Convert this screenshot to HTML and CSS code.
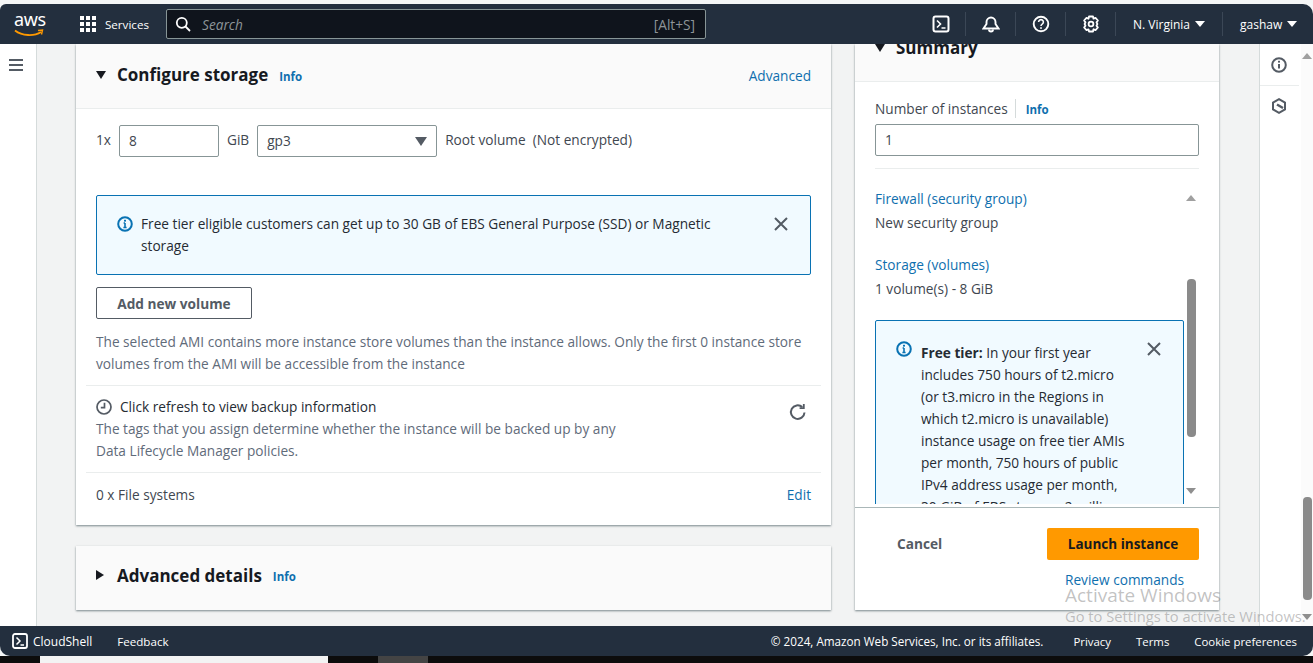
FILE: index.html
```html
<!DOCTYPE html>
<html>
<head>
    <title>Launch an instance</title>
    <link rel="stylesheet" href="styles.css">
</head>
<body>
    <div class="page">
        <header class="topbar">
            <div class="logo">
                <span class="logo-text">aws</span>
                <svg class="logo-smile" width="30" height="8" viewBox="0 0 30 8"><path d="M1 1.5C8 7 20 7.5 27 3" fill="none" stroke="#f90" stroke-width="1.8"/><path d="M24 1.5l4.5-.5-1 4.5" fill="none" stroke="#f90" stroke-width="1.4"/></svg>
            </div>
            <span class="services">
                <svg width="18" height="18" viewBox="0 0 18 18" fill="#fff"><rect x="1" y="1" width="4" height="4"/><rect x="7" y="1" width="4" height="4"/><rect x="13" y="1" width="4" height="4"/><rect x="1" y="7" width="4" height="4"/><rect x="7" y="7" width="4" height="4"/><rect x="13" y="7" width="4" height="4"/><rect x="1" y="13" width="4" height="4"/><rect x="7" y="13" width="4" height="4"/><rect x="13" y="13" width="4" height="4"/></svg>
                Services
            </span>
            <div class="search">
                <svg width="16" height="16" viewBox="0 0 16 16" fill="none" stroke="#fff" stroke-width="1.8"><circle cx="6.8" cy="6.8" r="5"/><path d="M10.5 10.5L15 15"/></svg>
                <span class="search-text">Search</span>
                <span class="search-key">[Alt+S]</span>
            </div>
            <div class="top-icons">
                <span class="top-icon">
                    <svg width="18" height="18" viewBox="0 0 18 18" fill="none" stroke="#fff" stroke-width="2"><rect x="1.5" y="1.5" width="15" height="15" rx="2"/><path d="M5 5.5l3.5 3.5L5 12.5M9.5 13H13.5" stroke-width="1.6"/></svg>
                </span>
                <span class="top-icon">
                    <svg width="18" height="18" viewBox="0 0 18 18" fill="none" stroke="#fff" stroke-width="1.9"><path d="M1.5 13.5h15L13.5 9V7a4.5 4.5 0 0 0-9 0v2z"/><path d="M7 14.5a2 2 0 0 0 4 0"/></svg>
                </span>
                <span class="top-icon">
                    <svg width="18" height="18" viewBox="0 0 18 18" fill="none" stroke="#fff" stroke-width="1.9"><circle cx="9" cy="9" r="7.3"/><path d="M6.6 7a2.4 2.4 0 1 1 3.6 2.1c-.8.5-1.2.9-1.2 1.9" stroke-width="1.6"/><rect x="8.2" y="12.2" width="1.6" height="1.7" fill="#fff" stroke="none"/></svg>
                </span>
                <span class="top-icon">
                    <svg width="18" height="18" viewBox="0 0 18 18" fill="none" stroke="#fff" stroke-width="1.8"><path d="M7 1.5h4l.5 2.2 2-.8 2.4 2.6-1.4 1.9.9 1.6-.9 1.6 1.4 1.9-2.4 2.6-2-.8-.5 2.2H7l-.5-2.2-2 .8-2.4-2.6 1.4-1.9L2.6 9l.9-1.6-1.4-1.9 2.4-2.6 2 .8z" stroke-linejoin="round"/><circle cx="9" cy="9" r="2.4"/></svg>
                </span>
                <span class="top-menu region">N. Virginia <i class="tri"></i></span>
                <span class="top-menu user">gashaw <i class="tri"></i></span>
            </div>
        </header>

        <div class="main">
            <nav class="sidenav">
                <svg width="16" height="14" viewBox="0 0 16 14" stroke="#545b64" stroke-width="2"><path d="M1 2h14M1 7h14M1 12h14"/></svg>
            </nav>

            <div class="content">
                <div class="left-col">
                    <section class="card storage">
                        <div class="card-head">
                            <i class="caret-down"></i>
                            <h2>Configure storage</h2>
                            <a class="info">Info</a>
                            <a class="advanced">Advanced</a>
                        </div>
                        <div class="card-body">
                            <div class="volume-row">
                                <span>1x</span>
                                <span class="input size-input">8</span>
                                <span>GiB</span>
                                <span class="input type-select">gp3<i class="select-caret"></i></span>
                                <span>Root volume&nbsp; (Not encrypted)</span>
                            </div>
                            <div class="alert wide-alert">
                                <svg class="info-icon" width="16" height="16" viewBox="0 0 16 16" fill="none" stroke="#0972b3" stroke-width="2"><circle cx="8" cy="8" r="6.8"/><path d="M8 7v4.5M6.4 11.5h3.2M6.6 7H8" stroke-width="1.6"/><rect x="7" y="3.8" width="2" height="1.8" fill="#0972b3" stroke="none"/></svg>
                                <p>Free tier eligible customers can get up to 30 GB of EBS General Purpose (SSD) or Magnetic storage</p>
                                <svg class="close-icon" width="16" height="16" viewBox="0 0 16 16" stroke="#545b64" stroke-width="2"><path d="M2 2l12 12M14 2L2 14"/></svg>
                            </div>
                            <button class="add-btn">Add new volume</button>
                            <p class="muted ami-note">The selected AMI contains more instance store volumes than the instance allows. Only the first 0 instance store volumes from the AMI will be accessible from the instance</p>
                        </div>
                        <div class="backup-row">
                            <div class="backup-text">
                                <div class="backup-title">
                                    <svg width="16" height="16" viewBox="0 0 16 16" fill="none" stroke="#545b64" stroke-width="1.7"><circle cx="8" cy="8" r="7"/><path d="M8.5 3.8V8.6H4.8"/></svg>
                                    Click refresh to view backup information
                                </div>
                                <p class="muted">The tags that you assign determine whether the instance will be backed up by any<br>Data Lifecycle Manager policies.</p>
                            </div>
                            <svg class="refresh" width="18" height="18" viewBox="0 0 18 18" fill="none" stroke="#545b64" stroke-width="2"><path d="M15.5 9.5a6.8 6.8 0 1 1-2.2-5.4"/><path d="M14.8 1v4.2h-4.2" stroke-width="1.8"/></svg>
                        </div>
                        <div class="files-row">
                            <span>0 x File systems</span>
                            <a>Edit</a>
                        </div>
                    </section>

                    <section class="card advanced-card">
                        <i class="caret-right"></i>
                        <h2>Advanced details</h2>
                        <a class="info">Info</a>
                    </section>
                </div>

                <aside class="summary">
                    <div class="summary-head">
                        <i class="caret-down"></i>
                        <h2>Summary</h2>
                    </div>
                    <div class="summary-top">
                        <div class="count-label"><span>Number of instances</span><a class="info">Info</a></div>
                        <div class="input count-input">1</div>
                    </div>
                    <div class="summary-scroll">
                        <div class="scroll-inner">
                            <a class="sum-link">Firewall (security group)</a>
                            <p class="sum-value">New security group</p>
                            <a class="sum-link">Storage (volumes)</a>
                            <p class="sum-value">1 volume(s) - 8 GiB</p>
                            <div class="alert tier-alert">
                                <svg class="info-icon" width="16" height="16" viewBox="0 0 16 16" fill="none" stroke="#0972b3" stroke-width="2"><circle cx="8" cy="8" r="6.8"/><path d="M8 7v4.5M6.4 11.5h3.2M6.6 7H8" stroke-width="1.6"/><rect x="7" y="3.8" width="2" height="1.8" fill="#0972b3" stroke="none"/></svg>
                                <p><b>Free tier:</b> In your first year includes 750 hours of t2.micro (or t3.micro in the Regions in which t2.micro is unavailable) instance usage on free tier AMIs per month, 750 hours of public IPv4 address usage per month, 30 GiB of EBS storage, 2 million</p>
                                <svg class="close-icon" width="16" height="16" viewBox="0 0 16 16" stroke="#545b64" stroke-width="2"><path d="M2 2l12 12M14 2L2 14"/></svg>
                            </div>
                        </div>
                        <div class="inner-bar">
                            <i class="arrow-up"></i>
                            <div class="inner-track"><div class="inner-thumb"></div></div>
                            <i class="arrow-down"></i>
                        </div>
                    </div>
                    <div class="summary-foot">
                        <div class="foot-btns">
                            <span class="cancel">Cancel</span>
                            <button class="launch">Launch instance</button>
                        </div>
                        <a class="review">Review commands</a>
                    </div>
                </aside>
            </div>

            <div class="rail">
                <svg width="16" height="16" viewBox="0 0 16 16" fill="none" stroke="#545b64" stroke-width="2"><circle cx="8" cy="8" r="6.8"/><path d="M8 7v4.5" stroke-width="2"/><rect x="7" y="3.8" width="2" height="1.8" fill="#545b64" stroke="none"/></svg>
                <span class="rail-line"></span>
                <svg width="16" height="16" viewBox="0 0 16 16" fill="none" stroke="#545b64" stroke-width="2"><path d="M8 1.2l6 3.4v6.8l-6 3.4-6-3.4V4.6z"/><path d="M6 6.5l6 3.5" stroke-width="2.4"/></svg>
            </div>

            <div class="page-bar">
                <i class="arrow-up"></i>
                <div class="page-track"><div class="page-thumb"></div></div>
                <i class="arrow-down"></i>
            </div>

            <div class="activate">
                <div class="activate-big">Activate Windows</div>
                <div class="activate-small">Go to Settings to activate Windows.</div>
            </div>
        </div>

        <footer class="footbar">
            <svg width="16" height="16" viewBox="0 0 16 16" fill="none" stroke="#fff" stroke-width="1.8"><rect x="1" y="1" width="14" height="14" rx="2"/><path d="M4.5 4.5L8 8l-3.5 3.5M8.5 12H12" stroke-width="1.5"/></svg>
            <span class="shell">CloudShell</span>
            <span class="feedback">Feedback</span>
            <span class="copy">© 2024, Amazon Web Services, Inc. or its affiliates.</span>
            <span class="foot-link first-link">Privacy</span>
            <span class="foot-link">Terms</span>
            <span class="foot-link">Cookie preferences</span>
        </footer>

        <div class="taskbar">
            <span class="task-a"></span>
            <span class="task-b"></span>
            <span class="task-c"></span>
            <span class="task-d"></span>
        </div>
    </div>
</body>
</html>
```

FILE: styles.css
```css
* {
    margin: 0;
    padding: 0;
    box-sizing: border-box;
}

html, body {
    height: 100%;
    overflow: hidden;
}

body {
    font-family: "Open Sans", "Noto Sans", Arial, sans-serif;
    font-size: 13.67px;
    color: #16191f;
    background-color: #fff;
}

a {
    color: #0f6fae;
}

.page {
    height: 663px;
    display: flex;
    flex-direction: column;
    padding-top: 4px;
    background-color: #f4f6f6;
}

/* top bar */
.topbar {
    height: 40px;
    flex: none;
    display: flex;
    align-items: center;
    background-color: #232f3e;
    color: #fff;
    border-radius: 6px 10px 0 0;
    position: relative;
    z-index: 2;
    padding-left: 14px;
}

.logo {
    width: 32px;
    height: 30px;
    position: relative;
}

.logo-text {
    display: block;
    font-family: "Noto Sans", sans-serif;
    font-size: 18px;
    line-height: 20px;
    letter-spacing: -0.4px;
}

.logo-smile {
    position: absolute;
    left: 0;
    top: 20px;
}

.services {
    display: flex;
    align-items: center;
    gap: 8px;
    margin-left: 33px;
    font-size: 11.6px;
    width: 87px;
    flex: none;
}

.search {
    width: 540px;
    height: 30px;
    flex: none;
    display: flex;
    align-items: center;
    padding: 0 10px 0 8px;
    background-color: #0f141c;
    border: 1px solid #879596;
    border-radius: 2px;
}

.search-text {
    margin-left: 11px;
    font-style: italic;
    color: #8d9499;
}

.search-key {
    margin-left: auto;
    color: #8d9499;
}

.top-icons {
    margin-left: auto;
    display: flex;
    align-items: center;
    height: 100%;
}

.top-icon {
    width: 50px;
    display: flex;
    justify-content: center;
    border-right: 1px solid #3b4756;
    height: 24px;
    align-items: center;
}

.top-menu {
    display: flex;
    align-items: center;
    gap: 5px;
    font-size: 12px;
    height: 24px;
}

.region {
    width: 107px;
    padding-left: 17px;
    border-right: 1px solid #3b4756;
}

.user {
    width: 90px;
    padding-left: 17px;
}

.tri {
    width: 0;
    height: 0;
    border-left: 5px solid transparent;
    border-right: 5px solid transparent;
    border-top: 6px solid #fff;
}

/* main area */
.main {
    flex: 1;
    min-height: 0;
    display: flex;
    position: relative;
    overflow: hidden;
}

.sidenav {
    width: 37px;
    flex: none;
    background-color: #fff;
    border-right: 1px solid #d5dbdb;
    padding: 13px 0 0 8px;
}

.content {
    width: 1222px;
    flex: none;
    display: flex;
    gap: 24px;
    padding-left: 39px;
    background-color: #f2f3f3;
    align-items: flex-start;
}

.left-col {
    width: 755px;
    flex: none;
}

.card {
    background-color: #fff;
    box-shadow: 0 1px 2px rgba(0, 28, 36, 0.5);
}

.card-head {
    height: 65px;
    display: flex;
    align-items: center;
    padding: 0 20px 3px;
    background-color: #fafafa;
    border-bottom: 1px solid #eaeded;
}

h2 {
    font-size: 17px;
    font-weight: 700;
    color: #16191f;
}

.info {
    font-size: 11.5px;
    font-weight: 700;
    margin-left: 11px;
    margin-top: 3px;
}

.advanced {
    margin-left: auto;
    margin-top: 2px;
}

.caret-down {
    width: 0;
    height: 0;
    flex: none;
    margin-right: 11px;
    border-left: 5.5px solid transparent;
    border-right: 5.5px solid transparent;
    border-top: 8px solid #16191f;
}

.caret-right {
    width: 0;
    height: 0;
    flex: none;
    margin-right: 13px;
    border-top: 5.5px solid transparent;
    border-bottom: 5.5px solid transparent;
    border-left: 8px solid #16191f;
}

.card-body {
    padding: 16px 20px 10px;
}

.volume-row {
    display: flex;
    align-items: center;
    height: 32px;
    gap: 8px;
    color: #414750;
}

.volume-row > span:not(.input) {
    padding-bottom: 3px;
}

.input {
    height: 32px;
    display: flex;
    align-items: center;
    padding: 0 0 2px 9px;
    background-color: #fff;
    border: 1px solid #879596;
    border-radius: 2px;
    color: #414750;
}

.size-input {
    width: 100px;
}

.type-select {
    width: 180px;
    position: relative;
}

.select-caret {
    position: absolute;
    right: 9px;
    top: 11px;
    width: 0;
    height: 0;
    border-left: 6.5px solid transparent;
    border-right: 6.5px solid transparent;
    border-top: 9px solid #545b64;
}

.alert {
    display: flex;
    background-color: #f1faff;
    border: 1px solid #0972b3;
    border-radius: 2px;
    line-height: 22px;
    color: #252b33;
}

.wide-alert {
    height: 80px;
    margin-top: 38px;
    padding: 17px 21px 0 20px;
}

.wide-alert p {
    width: 585px;
    margin-left: 8px;
}

.wide-alert .info-icon {
    margin-top: 3px;
    flex: none;
}

.wide-alert .close-icon {
    margin-left: auto;
    margin-top: 3px;
    flex: none;
}

.add-btn {
    display: block;
    width: 156px;
    height: 32px;
    margin-top: 12px;
    background-color: #fff;
    border: 1px solid #545b64;
    border-radius: 2px;
    color: #545b64;
    font-family: inherit;
    font-size: 13.67px;
    font-weight: 700;
}

.muted {
    color: #5f6b7a;
    line-height: 22px;
}

.ami-note {
    margin-top: 12px;
    width: 715px;
}

.backup-row {
    margin: 0 10px;
    padding: 10px 10px 10px;
    display: flex;
    justify-content: space-between;
    border-top: 1px solid #eaeded;
    border-bottom: 1px solid #eaeded;
}

.backup-title {
    display: flex;
    align-items: center;
    gap: 8px;
    line-height: 22px;
    color: #252b33;
}

.refresh {
    margin: 7px 4px 0 0;
}

.files-row {
    height: 52px;
    padding: 0 20px 10px;
    display: flex;
    align-items: center;
    justify-content: space-between;
    color: #414750;
}

.advanced-card {
    height: 64px;
    margin-top: 21px;
    padding: 0 20px 6px;
    display: flex;
    align-items: center;
    background-color: #fafafa;
}

/* summary panel */
.summary {
    width: 364px;
    height: 566px;
    flex: none;
    background-color: #fff;
    box-shadow: 0 1px 2px rgba(0, 28, 36, 0.5);
}

.summary-head {
    height: 38px;
    display: flex;
    align-items: center;
    padding: 0 20px 30px;
    background-color: #fafafa;
    border-bottom: 1px solid #eaeded;
    overflow: hidden;
}

.summary-head .caret-down {
    margin-right: 11px;
}

.summary-top {
    height: 87px;
    margin: 0 20px;
    padding-top: 16px;
    border-bottom: 1px solid #eaeded;
}

.count-label {
    display: flex;
    align-items: center;
    color: #414750;
    height: 20px;
}

.count-label span {
    padding-right: 7px;
    border-right: 1px solid #d5dbdb;
}

.count-label .info {
    margin-left: 10px;
}

.count-input {
    width: 324px;
    margin-top: 6px;
}

.summary-scroll {
    height: 335px;
    margin-left: 20px;
    display: flex;
    overflow: hidden;
}

.scroll-inner {
    width: 309px;
    flex: none;
    padding-top: 19px;
}

.sum-link {
    display: block;
    line-height: 22px;
}

.sum-value {
    line-height: 22px;
    margin: 2px 0 20px;
    color: #414750;
}

.tier-alert {
    margin-top: 20px;
    padding: 21px 21px 0 20px;
}

.tier-alert p {
    width: 205px;
    margin-left: 9px;
    flex: none;
}

.tier-alert .info-icon {
    flex: none;
    margin-top: -1px;
}

.tier-alert .close-icon {
    flex: none;
    margin-left: 20px;
    margin-top: -1px;
}

.inner-bar {
    width: 10px;
    margin-left: 2px;
    padding-top: 26px;
    display: flex;
    flex-direction: column;
    align-items: center;
}

.inner-track {
    height: 284px;
    padding-top: 78px;
}

.inner-thumb {
    width: 9px;
    height: 158px;
    border-radius: 4px;
    background-color: #8a8a8a;
}

.arrow-up {
    width: 0;
    height: 0;
    border-left: 5px solid transparent;
    border-right: 5px solid transparent;
    border-bottom: 6px solid #a0a0a0;
}

.arrow-down {
    width: 0;
    height: 0;
    margin-top: 3px;
    border-left: 5px solid transparent;
    border-right: 5px solid transparent;
    border-top: 6px solid #8f8f8f;
}

.summary-foot {
    height: 107px;
    margin-top: 3px;
    border-top: 1px solid #aab7b8;
    padding: 20px 20px 0 42px;
}

.foot-btns {
    display: flex;
    align-items: center;
    justify-content: space-between;
}

.cancel {
    font-weight: 700;
    color: #545b64;
    margin-top: -2px;
}

.launch {
    width: 152px;
    height: 32px;
    padding-bottom: 1px;
    background-color: #ff9900;
    border: none;
    border-radius: 2px;
    font-family: inherit;
    font-size: 13.5px;
    font-weight: 700;
    color: #16191f;
}

.review {
    display: block;
    margin: 11px 0 0 168px;
    line-height: 18px;
}

/* right rail */
.rail {
    width: 42px;
    flex: none;
    background-color: #fff;
    border-left: 1px solid #d5dbdb;
    display: flex;
    flex-direction: column;
    align-items: center;
    padding: 13px 3px 0 0;
}

.rail-line {
    width: 39px;
    height: 1px;
    margin: 12px 0 12px;
    background-color: #eaeded;
}

.page-bar {
    width: 12px;
    flex: none;
    background-color: #fbfbfb;
    display: flex;
    flex-direction: column;
    align-items: center;
    padding-top: 9px;
}

.page-track {
    height: 552px;
    padding-top: 438px;
}

.page-thumb {
    width: 9px;
    height: 103px;
    border-radius: 4px;
    background-color: #8a8a8a;
}

.activate {
    position: absolute;
    left: 1065px;
    top: 539px;
    color: rgba(120, 120, 120, 0.45);
    white-space: nowrap;
    pointer-events: none;
}

.activate-big {
    font-size: 19px;
    line-height: 24px;
}

.activate-small {
    font-size: 14.7px;
    line-height: 24px;
    margin-top: -3px;
}

/* footer */
.footbar {
    height: 30px;
    flex: none;
    display: flex;
    align-items: center;
    padding: 0 16px 0 12px;
    background-color: #232f3e;
    color: #fff;
    font-size: 12px;
    border-radius: 0 0 10px 10px;
}

.shell {
    margin-left: 5px;
}

.feedback {
    margin-left: 25px;
    font-size: 11.6px;
}

.copy {
    margin-left: auto;
    font-size: 11.7px;
}

.foot-link {
    margin-left: 25px;
    font-size: 11.4px;
}

.first-link {
    margin-left: 30px;
}

.taskbar {
    height: 7px;
    flex: none;
    display: flex;
    background-color: #0c0c0c;
}

.task-a {
    width: 40px;
}

.task-b {
    width: 288px;
    background-color: #f3f3f3;
}

.task-c {
    width: 50px;
}

.task-d {
    width: 50px;
    background-color: #444;
}
```
